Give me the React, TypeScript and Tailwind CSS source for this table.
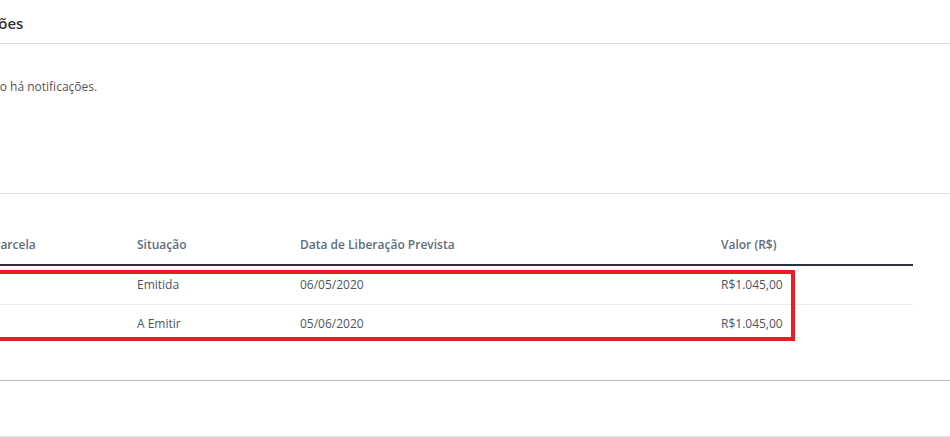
import React from 'react';

interface Parcela {
  numero: string;
  situacao: string;
  data: string;
  valor: string;
}

const parcelas: Parcela[] = [
  { numero: '1', situacao: 'Emitida', data: '06/05/2020', valor: 'R$1.045,00' },
  { numero: '2', situacao: 'A Emitir', data: '05/06/2020', valor: 'R$1.045,00' },
];

const cols = 'grid grid-cols-[144px_163px_421px_1fr]';

export default function App() {
  return (
    <div
      className="relative w-[950px] h-[437px] overflow-hidden bg-white"
      style={{ fontFamily: '"Open Sans", "Noto Sans", Arial, sans-serif' }}
    >
      {/* notificações */}
      <div className="h-[44px] flex items-center border-b border-[#dcdcdc]">
        <h2 className="ml-[-66px] text-[15px] font-semibold text-[#333] leading-none pt-[4px]">
          Notificações
        </h2>
      </div>
      <div className="h-[150px] pt-[34px] border-b border-[#e3e3e3]">
        <p className="ml-[-16px] text-[12px] text-[#555]">Não há notificações.</p>
      </div>

      {/* parcelas */}
      <div className="ml-[-15px] w-[928px] pt-[31px] text-[12px]">
        <div className={`${cols} h-[41px] items-center border-b-2 border-[#2b3136] font-semibold text-[#5d6d7e]`}>
          <div className="px-2">Parcela</div>
          <div className="px-2">Situação</div>
          <div className="px-2">Data de Liberação Prevista</div>
          <div className="px-2">Valor (R$)</div>
        </div>
        {parcelas.map((p, i) => (
          <div
            key={p.numero}
            className={`${cols} items-center text-[#4d5560] ${i === 0 ? 'h-[39px] border-b border-[#ececec]' : 'h-[38px]'}`}
          >
            <div className="px-2 text-transparent">{p.numero}</div>
            <div className="px-2">{p.situacao}</div>
            <div className="px-2">{p.data}</div>
            <div className="px-2">{p.valor}</div>
          </div>
        ))}
      </div>

      <div className="mt-[37px] border-t border-[#b0bec5] h-[57px] border-b border-b-[#dde0e4]" />

      {/* destaque */}
      <div className="absolute left-[-10px] top-[270px] w-[805px] h-[71px] border-4 border-[#ed1c24] pointer-events-none" />
    </div>
  );
}
